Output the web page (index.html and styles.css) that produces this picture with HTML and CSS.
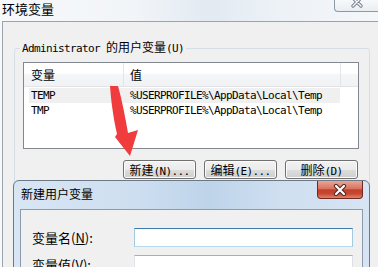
FILE: index.html
```html
<!DOCTYPE html>
<html lang="zh-CN">
<head>
  <meta charset="UTF-8">
  <title>环境变量</title>
  <link rel="stylesheet" href="styles.css">
</head>
<body>
  <div class="window">
    <div class="titlebar">
      <span class="title">环境变量</span>
      <span class="close-btn">
        <svg width="12" height="8" viewBox="0 0 12 8">
          <path d="M2,-2 L10,6 M10,-2 L2,6" stroke="#707c8a" stroke-width="3.2" stroke-linecap="round"/>
          <path d="M2,-2 L10,6 M10,-2 L2,6" stroke="#fbfcfd" stroke-width="1.4" stroke-linecap="round"/>
        </svg>
      </span>
    </div>
    <div class="client">
      <fieldset class="group">
        <legend><span class="mono">Administrator </span>的用户变量<span class="mono">(U)</span></legend>
        <div class="listview">
          <div class="lv-header">
            <div class="col col-name">变量</div>
            <div class="col col-value">值</div>
          </div>
          <div class="lv-row first selected">
            <span class="cell-name mono">TEMP</span>
            <span class="cell-value mono">%USERPROFILE%\AppData\Local\Temp</span>
          </div>
          <div class="lv-row">
            <span class="cell-name mono">TMP</span>
            <span class="cell-value mono">%USERPROFILE%\AppData\Local\Temp</span>
          </div>
        </div>
        <div class="btn-row">
          <button class="btn">新建<span class="mono">(N)...</span></button>
          <button class="btn">编辑<span class="mono">(E)...</span></button>
          <button class="btn">删除<span class="mono">(D)</span></button>
        </div>
      </fieldset>
    </div>
  </div>

  <svg class="arrow" width="378" height="267" viewBox="0 0 378 267">
    <path d="M110,86 C111,100 113,116 117,134 L115,137 L130,156 L138,130 L128,133 C125,116 122,100 118,86 Z" fill="#f03c3c"/>
  </svg>

  <div class="dialog">
    <div class="dlg-titlebar">
      <span class="dlg-title">新建用户变量</span>
      <span class="dlg-close">
        <svg width="16" height="12" viewBox="0 0 16 12">
          <path d="M4,2 L12,10 M12,2 L4,10" stroke="#4a2a26" stroke-width="4.2" stroke-linecap="round"/>
          <path d="M4,2 L12,10 M12,2 L4,10" stroke="#ffffff" stroke-width="2.2" stroke-linecap="round"/>
        </svg>
      </span>
    </div>
    <div class="dlg-client">
      <div class="form-row">
        <label class="form-label" for="varName">变量名(<u>N</u>):</label>
        <input type="text" id="varName" class="field focused">
      </div>
      <div class="form-row">
        <label class="form-label" for="varValue">变量值(<u>V</u>):</label>
        <input type="text" id="varValue" class="field">
      </div>
    </div>
  </div>
</body>
</html>
```

FILE: styles.css
```css
* {
  box-sizing: border-box;
}
body {
  margin: 0;
  width: 378px;
  height: 267px;
  overflow: hidden;
  position: relative;
  font-family: "Noto Sans CJK SC", sans-serif;
  font-size: 12px;
  color: #000;
  background: #f0f0f0;
}
.mono {
  font-family: "DejaVu Sans Mono", "Liberation Mono", monospace;
  font-size: 11px;
  letter-spacing: -0.62px;
}

/* main window */
.window {
  height: 267px;
  display: flex;
  flex-direction: column;
  background: linear-gradient(to right, #f6f8fa 0%, #f2f5f8 35%, #e2eaf2 55%, #edf2f7 75%, #f4f7fa 100%);
}
.titlebar {
  height: 21px;
  display: flex;
  justify-content: space-between;
  align-items: flex-start;
}
.title {
  font-size: 13px;
  line-height: 17px;
  padding: 0 0 0 2px;
}
.close-btn {
  width: 44px;
  height: 12px;
  border: 1px solid #8e99a6;
  border-top: none;
  border-right: none;
  border-radius: 0 0 0 4px;
  background: linear-gradient(#f7f9fb, #e9eef3);
  display: flex;
  justify-content: center;
}
.client {
  flex: 1;
  margin-left: 2px;
  border-top: 1px solid #9ba3ac;
  border-left: 1px solid #9ba3ac;
  background: #f0f0f0;
}

/* group box */
.group {
  width: 356px;
  min-width: 0;
  margin: 18px 0 0 11px;
  padding: 6px 10px 40px 8px;
  border: 1px solid #d5dfe5;
  border-radius: 3px;
}
.group legend {
  padding: 0 2px;
  margin-left: -3px;
  line-height: 14px;
}

/* list view */
.listview {
  height: 87px;
  border: 1px solid #828790;
  background: #fff;
}
.lv-header {
  display: flex;
  height: 24px;
  border-bottom: 1px solid #e2e4e7;
  background: linear-gradient(#ffffff 0%, #ffffff 45%, #f5f6f7 50%, #f1f2f4 100%);
}
.col {
  line-height: 23px;
  border-right: 1px solid #e3e5e8;
}
.col-name {
  width: 100px;
  padding-left: 7px;
}
.col-value {
  width: 217px;
  padding-left: 6px;
}
.lv-row {
  display: flex;
  width: 311px;
  height: 15px;
  margin-left: 5px;
  line-height: 15px;
}
.lv-row.first {
  margin-top: 1px;
}
.lv-row.selected {
  background: #f0f0f0;
}
.cell-name {
  width: 101px;
  padding-left: 2px;
}

/* buttons */
.btn-row {
  display: flex;
  justify-content: flex-end;
  gap: 8px;
  margin-top: 11px;
  padding-right: 1px;
}
.btn {
  width: 73px;
  height: 19px;
  padding: 0;
  border: 1px solid #707070;
  border-radius: 3px;
  background: linear-gradient(#f2f2f2 0%, #ebebeb 50%, #dddddd 50%, #cfcfcf 100%);
  box-shadow: inset 0 0 0 1px #fbfbfb;
  font-family: "Noto Sans CJK SC", sans-serif;
  font-size: 12px;
  line-height: 17px;
  color: #000;
}

/* new variable dialog */
.dialog {
  position: absolute;
  left: 13px;
  top: 180px;
  width: 357px;
  height: 100px;
  padding: 0 6px;
  border: 1px solid #6d7886;
  border-radius: 6px 6px 0 0;
  background: linear-gradient(to right, #d8e6f4 0%, #cddef0 35%, #bed4ea 55%, #cfdff0 75%, #d6e4f3 100%);
}
.dlg-titlebar {
  height: 28px;
  display: flex;
  justify-content: space-between;
  align-items: flex-start;
}
.dlg-title {
  padding: 4px 0 0 1px;
  font-size: 12px;
  line-height: 17px;
}
.dlg-close {
  width: 46px;
  height: 18px;
  border: 1px solid #6e2a22;
  border-top: none;
  border-radius: 0 0 4px 4px;
  background: linear-gradient(#e8a797 0%, #d9725e 45%, #c3402b 52%, #c84731 75%, #df866c 100%);
  display: flex;
  justify-content: center;
  align-items: center;
}
.dlg-client {
  height: 80px;
  padding: 18px 0 0 11px;
  border: 1px solid #8c9aab;
  background: #f0f0f0;
}
.form-row {
  display: flex;
  align-items: center;
  height: 19px;
  margin-bottom: 8px;
}
.form-label {
  width: 102px;
  font-size: 13px;
  line-height: 19px;
}
.field {
  width: 219px;
  height: 19px;
  border: 1px solid;
  border-color: #abadb3 #dbdfe6 #e3e9ef #e2e3ea;
  background: #fff;
  outline: none;
}
.field.focused {
  border-color: #3d7bad #a4c9e3 #b7d9ed #a4c9e3;
}

.arrow {
  position: absolute;
  left: 0;
  top: 0;
  pointer-events: none;
}
```
